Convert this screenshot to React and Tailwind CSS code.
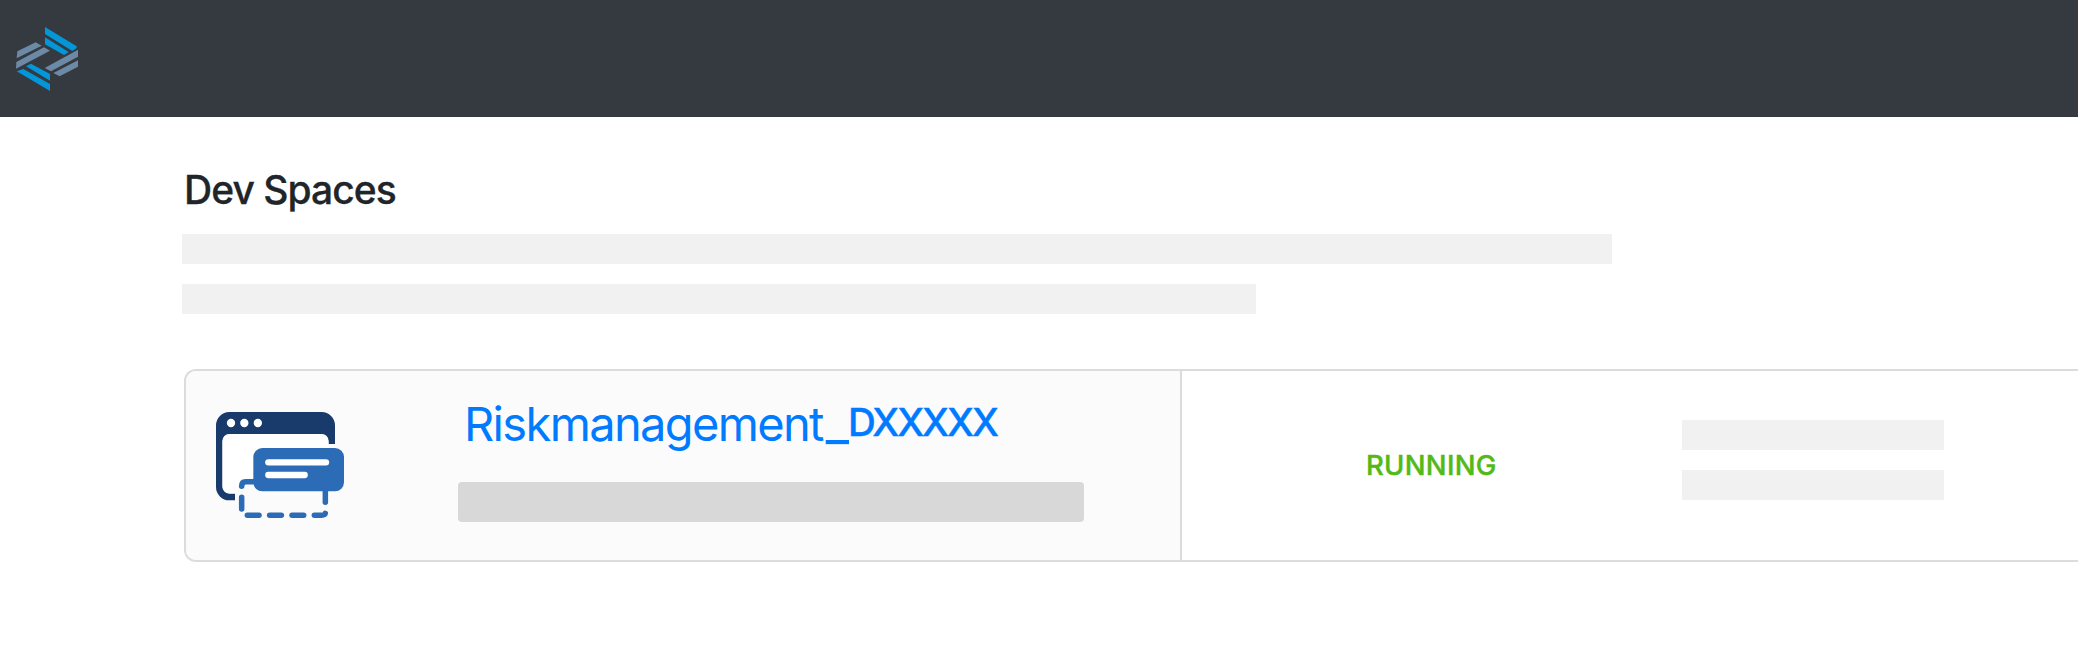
function Logo() {
  return (
    <svg className="h-16 w-16" viewBox="48 51 192 192" aria-hidden="true">
      <g fill="#0396d9">
        <path d="M135 51 230 109V114L217 123 135 72Z" />
        <path d="M135 82 206 126 192 135 135 103Z" />
        <path d="M50 184 70 177 150 222V243Z" />
        <path d="M78 169 93 161 150 192V212Z" />
      </g>
      <g fill="#6c89a5">
        <path d="M52 124 107 97 125 107 50 145Z" />
        <path d="M49 156 132 112 150 122 48 176Z" />
        <path d="M234 119V140L153 184 134 174Z" />
        <path d="M234 151V170L179 199 160 189Z" />
      </g>
    </svg>
  );
}

function DevSpaceIcon() {
  return (
    <svg className="h-[106px] w-32 shrink-0" viewBox="123 156 384 318" aria-hidden="true">
      <path
        fill="#183b6b"
        d="M163 156H440A40 40 0 0 1 480 196V252H461V243A21 21 0 0 0 440 222H163A21 21 0 0 0 142 243V380A21 21 0 0 0 163 401H180V421H163A40 40 0 0 1 123 381V196A40 40 0 0 1 163 156Z"
      />
      <path fill="#fff" d="M163 223H440A20 20 0 0 1 460 243V264H260A26 26 0 0 0 234 290V355H210A20 20 0 0 0 190 375V400H163A20 20 0 0 1 143 380V243A20 20 0 0 1 163 223Z" />
      <g fill="#fff">
        <circle cx="168" cy="189" r="12.5" />
        <circle cx="208" cy="189" r="12.5" />
        <circle cx="248.500" cy="189" r="12.5" />
      </g>
      <rect x="235" y="264" width="272" height="130" rx="27" fill="#2c6bb5" />
      <g stroke="#fff" strokeWidth="19" strokeLinecap="round">
        <path d="M280 307H453" />
        <path d="M280 345H389" />
      </g>
      <g fill="none" stroke="#2c6bb5" strokeWidth="16.500" strokeLinecap="round">
        <path d="M240 365H212Q200 365 200 379" />
        <path d="M200 412V447" />
        <path d="M217 465.500H252" />
        <path d="M284 465.500H319" />
        <path d="M351 465.500H386" />
        <path d="M418 465.500H440Q450 465.500 451 460" />
        <path d="M451 390V427" />
      </g>
    </svg>
  );
}

export default function App() {
  return (
    <div className="h-[658px] w-full overflow-hidden bg-white font-['Inter',sans-serif]">
      <header className="flex h-[117px] items-start bg-[#353940] pt-[27px] pl-4">
        <Logo />
      </header>
      <main className="pt-[49px] pl-[182px]">
        <h1 className="pl-0.5 text-[39px] leading-12 font-medium tracking-[-0.95px] text-[#212529] [-webkit-text-stroke:0.3px]">Dev Spaces</h1>
        <div className="mt-5 flex flex-col gap-5">
          <div className="h-[30px] w-[1430px] bg-[#f1f1f1]" />
          <div className="h-[30px] w-[1074px] bg-[#f1f1f1]" />
        </div>
        <section className="mt-[55px] ml-0.5 flex h-[193px] overflow-hidden rounded-l-xl border-y-2 border-l-2 border-[#dcdcdc]">
          <div className="flex w-[996px] shrink-0 border-r-2 border-[#dcdcdc] bg-[#fbfbfb] pt-[41px] pl-[30px]">
            <DevSpaceIcon />
            <div className="-mt-[14px] ml-[114px]">
              <div className="flex h-14 items-start pl-1.5 whitespace-nowrap text-[#007bff]">
                <span className="-mt-0.5 text-[47px] leading-14 tracking-[-1.65px]">Riskmanagement</span>
                <span className="-mt-1 ml-[3px] text-[51px] leading-14">_</span>
                <span className="-mt-px -ml-px text-[38.5px] leading-[50px] font-medium tracking-[-2.05px] [-webkit-text-stroke:0.4px]">DXXXXX</span>
              </div>
              <div className="mt-[28px] h-10 w-[626px] rounded bg-[#d8d8d8]" />
            </div>
          </div>
          <div className="flex grow pt-[49px] pl-[184px]">
            <div className="mt-[25px] w-[316px] text-[27.5px] leading-10 font-medium tracking-[0.3px] text-[#53b917] [-webkit-text-stroke:0.4px]">RUNNING</div>
            <div className="flex flex-col gap-5">
              <div className="h-[30px] w-[262px] bg-[#f1f1f1]" />
              <div className="h-[30px] w-[262px] bg-[#f1f1f1]" />
            </div>
          </div>
        </section>
      </main>
    </div>
  );
}
